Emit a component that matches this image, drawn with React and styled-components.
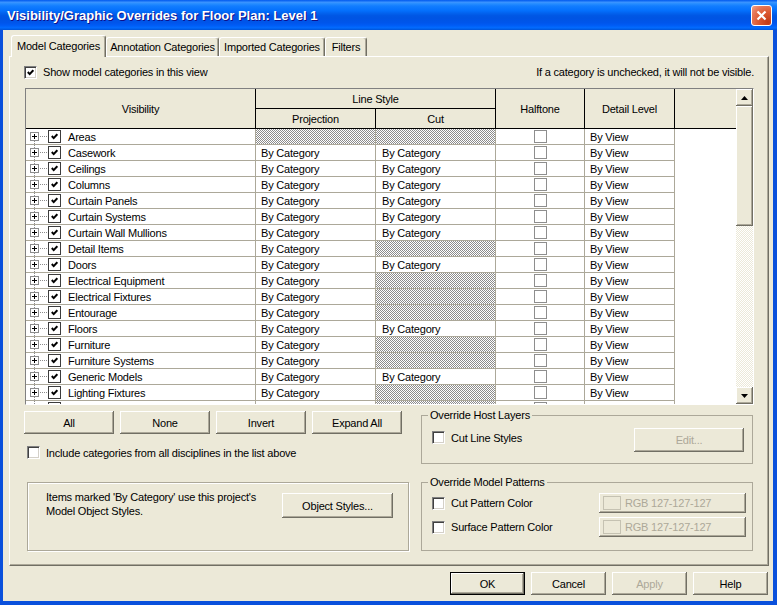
import React from 'react';
import styled, { createGlobalStyle, css } from 'styled-components';

const GlobalStyle = createGlobalStyle`
  html, body {
    margin: 0;
    padding: 0;
    background: #ece9d8;
  }
  body {
    font-family: "Liberation Sans", Arial, sans-serif;
    font-size: 11px;
    letter-spacing: -0.2px;
    color: #000;
  }
  * {
    box-sizing: border-box;
  }
`;

const FACE = '#ece9d8';
const RAISED = 'inset -1px -1px #716f64, inset 1px 1px #fff, inset -2px -2px #aca899';
const HATCH = 'repeating-conic-gradient(#8c8c8c 0 25%, #fff 0 50%) 0 0 / 2px 2px';
const COLS = '230px 120px 120px 89px 90px 61px';

const ROWS = [
  { name: 'Areas', proj: false, cut: false },
  { name: 'Casework', proj: true, cut: true },
  { name: 'Ceilings', proj: true, cut: true },
  { name: 'Columns', proj: true, cut: true },
  { name: 'Curtain Panels', proj: true, cut: true },
  { name: 'Curtain Systems', proj: true, cut: true },
  { name: 'Curtain Wall Mullions', proj: true, cut: true },
  { name: 'Detail Items', proj: true, cut: false },
  { name: 'Doors', proj: true, cut: true },
  { name: 'Electrical Equipment', proj: true, cut: false },
  { name: 'Electrical Fixtures', proj: true, cut: false },
  { name: 'Entourage', proj: true, cut: false },
  { name: 'Floors', proj: true, cut: true },
  { name: 'Furniture', proj: true, cut: false },
  { name: 'Furniture Systems', proj: true, cut: false },
  { name: 'Generic Models', proj: true, cut: true },
  { name: 'Lighting Fixtures', proj: true, cut: false },
  { name: 'Mass', proj: true, cut: false },
];

const TABS = [
  { label: 'Model Categories', w: 95, active: true },
  { label: 'Annotation Categories', w: 113 },
  { label: 'Imported Categories', w: 106 },
  { label: 'Filters', w: 42 },
];

/* ---------- window frame ---------- */

const Window = styled.div`
  width: 777px;
  height: 605px;
  display: flex;
  flex-direction: column;
  background: #0a50dc;
  overflow: hidden;
`;

const TitleBar = styled.div`
  height: 30px;
  flex: none;
  display: flex;
  align-items: center;
  justify-content: space-between;
  padding: 1px 5px 0 7px;
  background: linear-gradient(
    to bottom,
    #0058ee 0%,
    #3a93ff 8%,
    #288eff 12%,
    #127dff 20%,
    #036ffc 36%,
    #0262ee 44%,
    #0057e5 52%,
    #0054e3 60%,
    #0055eb 76%,
    #005bf5 84%,
    #026afe 92%,
    #0062ef 96%,
    #0052d6 100%
  );
`;

const Title = styled.span`
  color: #fff;
  font: bold 13px "Liberation Sans", Arial, sans-serif;
  letter-spacing: 0;
  text-shadow: 1px 1px #0f1089;
`;

const CloseButton = styled.div`
  width: 21px;
  height: 21px;
  margin-top: -1px;
  border: 1px solid #fff;
  border-radius: 3px;
  display: flex;
  align-items: center;
  justify-content: center;
  background: radial-gradient(circle at 85% 85%, #c23a15 0%, #dd5a32 45%, #e7795a 75%, #f2a58c 100%);
`;

const Client = styled.div`
  flex: 1;
  margin: 0 4px 4px 3px;
  background: ${FACE};
  display: flex;
  flex-direction: column;
`;

/* ---------- tabs ---------- */

const TabStrip = styled.div`
  height: 21px;
  margin-top: 5px;
  padding-left: 8px;
  display: flex;
  align-items: flex-end;
  position: relative;
  z-index: 1;
`;

const Tab = styled.div`
  width: ${(p) => p.$w}px;
  height: ${(p) => (p.$active ? 22 : 19)}px;
  margin-bottom: ${(p) => (p.$active ? -1 : 0)}px;
  display: flex;
  align-items: center;
  justify-content: center;
  padding-bottom: ${(p) => (p.$active ? 2 : 0)}px;
  background: ${FACE};
  border-top: 1px solid #fff;
  border-left: 1px solid #fff;
  border-right: 1px solid #716f64;
  box-shadow: inset -1px 0 #aca899;
  border-radius: 3px 3px 0 0;
  white-space: nowrap;
`;

const Panel = styled.div`
  height: 510px;
  margin: 0 4px 0 6px;
  border: 1px solid;
  border-color: #fff #716f64 #716f64 #fff;
  box-shadow: inset -1px -1px #aca899;
  padding: 8px 14px 0;
  display: flex;
  flex-direction: column;
`;

/* ---------- checkbox ---------- */

const boxLooks = {
  sunken: css`
    border: 1px solid;
    border-color: #808080 #fff #fff #808080;
    box-shadow: inset 1px 1px #404040, inset -1px -1px #d4d0c8;
  `,
  flat: css`
    border: 1px solid #3c3c3c;
  `,
  light: css`
    border: 1px solid #8e8e8e;
  `,
};

const Box = styled.span`
  width: 13px;
  height: 13px;
  flex: none;
  display: inline-flex;
  align-items: center;
  justify-content: center;
  background: #fff;
  ${(p) => boxLooks[p.$look]}
`;

function CheckBox({ checked, look = 'sunken' }) {
  return (
    <Box $look={look}>
      {checked && (
        <svg width="7" height="7" viewBox="0 0 7 7">
          <polyline points="0.8,3 2.7,5.1 6.3,1.2" fill="none" stroke="#000" strokeWidth="2" />
        </svg>
      )}
    </Box>
  );
}

const CheckLabel = styled.label`
  display: flex;
  align-items: center;
  gap: 6px;
  padding-left: ${(p) => p.$indent || 0}px;
  margin-top: ${(p) => p.$top || 0}px;
  white-space: nowrap;
`;

/* ---------- buttons ---------- */

const Button = styled.div`
  width: ${(p) => p.$w || 75}px;
  height: ${(p) => p.$h || 23}px;
  flex: none;
  display: flex;
  align-items: center;
  justify-content: ${(p) => (p.$left ? 'flex-start' : 'center')};
  gap: 4px;
  padding-left: ${(p) => (p.$left ? 4 : 0)}px;
  margin-left: ${(p) => (p.$push ? 'auto' : '0')};
  margin-right: ${(p) => p.$right || 0}px;
  margin-top: ${(p) => p.$top || 0}px;
  background: ${FACE};
  color: ${(p) => (p.$disabled ? '#aca899' : '#000')};
  box-shadow: ${RAISED};
  border: ${(p) => (p.$default ? '1px solid #000' : 'none')};
`;

const Swatch = styled.span`
  width: 18px;
  height: 14px;
  border: 1px solid #c5c2b2;
  flex: none;
`;

/* ---------- grid view ---------- */

const TopRow = styled.div`
  height: 14px;
  display: flex;
  align-items: center;
  justify-content: space-between;
  margin-bottom: 9px;
`;

const GridFrame = styled.div`
  height: 317px;
  width: 729px;
  margin-left: 1px;
  flex: none;
  display: flex;
  border: 1px solid;
  border-color: #808080 #fff #fff #808080;
`;

const GridView = styled.div`
  width: 710px;
  display: flex;
  flex-direction: column;
  background: #fff;
`;

const HeadGrid = styled.div`
  flex: none;
  display: grid;
  grid-template-columns: ${COLS};
  grid-template-rows: 20px 19px;
  border-bottom: 1px solid #000;
  background: ${FACE};
`;

const HeadCell = styled.div`
  grid-column: ${(p) => p.$col};
  grid-row: ${(p) => p.$row};
  display: flex;
  align-items: center;
  justify-content: center;
  border-right: ${(p) => (p.$last ? 'none' : '1px solid #000')};
  border-bottom: ${(p) => (p.$under ? '1px solid #000' : 'none')};
`;

const Body = styled.div`
  flex: 1;
  overflow: hidden;
`;

const Row = styled.div`
  height: 16px;
  display: grid;
  grid-template-columns: ${COLS};
`;

const Cell = styled.div`
  display: flex;
  align-items: center;
  justify-content: ${(p) => (p.$center ? 'center' : 'flex-start')};
  padding-left: ${(p) => (p.$center ? 0 : p.$pad ?? 5)}px;
  border-right: 1px solid #aca899;
  border-bottom: 1px solid #aca899;
  background: ${(p) => (p.$hatch ? HATCH : '#fff')};
  white-space: nowrap;
  overflow: hidden;
`;

const BlankCell = styled.div`
  background: #fff;
`;

const Name = styled.span`
  margin-left: 7px;
`;

function TreeGlyph({ first }) {
  return (
    <svg width="18" height="15" viewBox="0 0 18 15" style={{ flex: 'none' }}>
      {!first && <line x1="4.5" y1="0" x2="4.5" y2="3" stroke="#8c8c8c" strokeDasharray="1 1" />}
      <line x1="4.5" y1="12" x2="4.5" y2="15" stroke="#8c8c8c" strokeDasharray="1 1" />
      <rect x="0.5" y="3.5" width="8" height="8" fill="#fff" stroke="#8c8c8c" />
      <line x1="2" y1="7.5" x2="7" y2="7.5" stroke="#000" />
      <line x1="4.5" y1="5" x2="4.5" y2="10" stroke="#000" />
      <line x1="10" y1="7.5" x2="17" y2="7.5" stroke="#8c8c8c" strokeDasharray="1 1" />
    </svg>
  );
}

const ScrollBar = styled.div`
  width: 17px;
  display: flex;
  flex-direction: column;
  background: repeating-conic-gradient(#fff 0 25%, ${FACE} 0 50%) 0 0 / 2px 2px;
`;

const ScrollButton = styled.div`
  height: 17px;
  flex: none;
  display: flex;
  align-items: center;
  justify-content: center;
  background: ${FACE};
  box-shadow: ${RAISED};
`;

const Thumb = styled.div`
  height: 120px;
  flex: none;
  background: ${FACE};
  box-shadow: ${RAISED};
`;

const Track = styled.div`
  flex: 1;
`;

function Arrow({ down }) {
  return (
    <svg width="7" height="4" viewBox="0 0 7 4">
      <polygon points={down ? '0,0 7,0 3.5,4' : '0,4 7,4 3.5,0'} fill="#000" />
    </svg>
  );
}

/* ---------- lower area ---------- */

const Lower = styled.div`
  display: flex;
  gap: 12px;
`;

const LeftCol = styled.div`
  width: 385px;
  display: flex;
  flex-direction: column;
`;

const RightCol = styled.div`
  width: 332px;
  display: flex;
  flex-direction: column;
`;

const ButtonRow = styled.div`
  display: flex;
  gap: 6px;
  margin-top: 6px;
`;

const InfoBox = styled.div`
  width: 382px;
  height: 69px;
  margin: 23px 0 0 3px;
  border: 1px solid #aca899;
  box-shadow: 1px 1px 0 #fff, inset 1px 1px 0 #fff;
  display: flex;
  align-items: flex-start;
  padding: 7px 15px 0 18px;
`;

const InfoText = styled.div`
  line-height: 14px;
`;

const Group = styled.fieldset`
  height: ${(p) => p.$h}px;
  margin: ${(p) => p.$top}px 0 0;
  padding: ${(p) => p.$padTop}px 6px 0 10px;
  border: 1px solid #aca899;
  min-width: 0;
  display: flex;
  flex-direction: column;
  gap: 4px;
`;

const Legend = styled.legend`
  margin-left: -4px;
  padding: 0 2px;
  line-height: 13px;
`;

const GroupRow = styled.div`
  height: ${(p) => p.$h || 20}px;
  display: flex;
  align-items: ${(p) => p.$align || 'center'};
`;

const Footer = styled.div`
  display: flex;
  justify-content: flex-end;
  gap: 6px;
  padding: 6px 5px 0 0;
`;

export default function App() {
  return (
    <>
      <GlobalStyle />
      <Window>
        <TitleBar>
          <Title>Visibility/Graphic Overrides for Floor Plan: Level 1</Title>
          <CloseButton>
            <svg width="11" height="11" viewBox="0 0 11 11">
              <path d="M1.5 1.5 L9.5 9.5 M9.5 1.5 L1.5 9.5" stroke="#fff" strokeWidth="2.2" />
            </svg>
          </CloseButton>
        </TitleBar>

        <Client>
          <TabStrip>
            {TABS.map((t) => (
              <Tab key={t.label} $w={t.w} $active={t.active}>
                {t.label}
              </Tab>
            ))}
          </TabStrip>

          <Panel>
            <TopRow>
              <CheckLabel>
                <CheckBox checked />
                Show model categories in this view
              </CheckLabel>
              <span>If a category is unchecked, it will not be visible.</span>
            </TopRow>

            <GridFrame>
              <GridView>
                <HeadGrid>
                  <HeadCell $col="1" $row="1 / 3">Visibility</HeadCell>
                  <HeadCell $col="2 / 4" $row="1" $under>Line Style</HeadCell>
                  <HeadCell $col="2" $row="2">Projection</HeadCell>
                  <HeadCell $col="3" $row="2">Cut</HeadCell>
                  <HeadCell $col="4" $row="1 / 3">Halftone</HeadCell>
                  <HeadCell $col="5" $row="1 / 3">Detail Level</HeadCell>
                  <HeadCell $col="6" $row="1 / 3" $last />
                </HeadGrid>
                <Body>
                  {ROWS.map((r, i) => (
                    <Row key={r.name}>
                      <Cell $pad={4}>
                        <TreeGlyph first={i === 0} />
                        <CheckBox checked look="flat" />
                        <Name>{r.name}</Name>
                      </Cell>
                      <Cell $hatch={!r.proj}>{r.proj && 'By Category'}</Cell>
                      <Cell $hatch={!r.cut} $pad={6}>{r.cut && 'By Category'}</Cell>
                      <Cell $center>
                        <CheckBox look="light" />
                      </Cell>
                      <Cell>By View</Cell>
                      <BlankCell />
                    </Row>
                  ))}
                </Body>
              </GridView>
              <ScrollBar>
                <ScrollButton>
                  <Arrow />
                </ScrollButton>
                <Thumb />
                <Track />
                <ScrollButton>
                  <Arrow down />
                </ScrollButton>
              </ScrollBar>
            </GridFrame>

            <Lower>
              <LeftCol>
                <ButtonRow>
                  <Button $w={90}>All</Button>
                  <Button $w={90}>None</Button>
                  <Button $w={90}>Invert</Button>
                  <Button $w={90}>Expand All</Button>
                </ButtonRow>
                <CheckLabel $indent={3} $top={12}>
                  <CheckBox />
                  Include categories from all disciplines in the list above
                </CheckLabel>
                <InfoBox>
                  <InfoText>
                    Items marked 'By Category' use this project's
                    <br />
                    Model Object Styles.
                  </InfoText>
                  <Button $w={111} $h={25} $push $top={3}>
                    Object Styles...
                  </Button>
                </InfoBox>
              </LeftCol>

              <RightCol>
                <Group $h={55} $top={4} $padTop={6}>
                  <Legend>Override Host Layers</Legend>
                  <GroupRow $h={24} $align="flex-start">
                    <CheckLabel $top={3}>
                      <CheckBox />
                      Cut Line Styles
                    </CheckLabel>
                    <Button $w={110} $h={24} $push $right={2} $disabled>
                      Edit...
                    </Button>
                  </GroupRow>
                </Group>
                <Group $h={75} $top={12} $padTop={4}>
                  <Legend>Override Model Patterns</Legend>
                  <GroupRow>
                    <CheckLabel>
                      <CheckBox />
                      Cut Pattern Color
                    </CheckLabel>
                    <Button $w={147} $h={20} $push $left $disabled>
                      <Swatch />
                      RGB 127-127-127
                    </Button>
                  </GroupRow>
                  <GroupRow>
                    <CheckLabel>
                      <CheckBox />
                      Surface Pattern Color
                    </CheckLabel>
                    <Button $w={147} $h={20} $push $left $disabled>
                      <Swatch />
                      RGB 127-127-127
                    </Button>
                  </GroupRow>
                </Group>
              </RightCol>
            </Lower>
          </Panel>

          <Footer>
            <Button $default>OK</Button>
            <Button>Cancel</Button>
            <Button $disabled>Apply</Button>
            <Button>Help</Button>
          </Footer>
        </Client>
      </Window>
    </>
  );
}
